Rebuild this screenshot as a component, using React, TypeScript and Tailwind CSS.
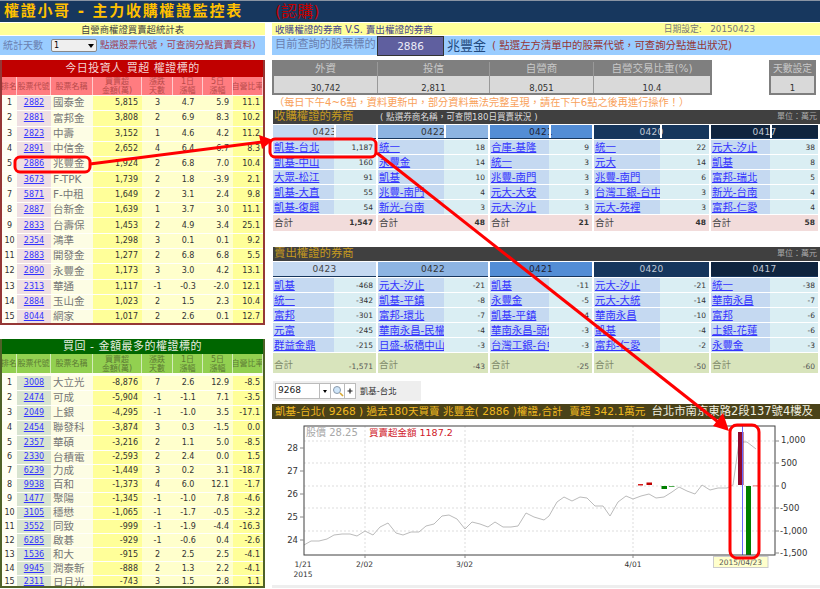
import React from "react";

type StockRow = [string, string, string, string, string, string, string, string];

const BUY_STOCKS: StockRow[] = [
  ["1", "2882", "國泰金", "5,815", "3", "4.7", "5.9", "11.1"],
  ["2", "2881", "富邦金", "3,808", "2", "6.9", "8.3", "10.2"],
  ["3", "2823", "中壽", "3,152", "1", "4.6", "4.2", "11.2"],
  ["4", "2891", "中信金", "2,652", "4", "6.4", "6.7", "8.3"],
  ["5", "2886", "兆豐金", "1,924", "2", "6.8", "7.0", "10.4"],
  ["6", "3673", "F-TPK", "1,739", "2", "1.8", "-3.9", "2.1"],
  ["7", "5871", "F-中租", "1,649", "2", "3.1", "2.4", "9.8"],
  ["8", "2887", "台新金", "1,639", "1", "3.7", "3.0", "11.1"],
  ["9", "2833", "台壽保", "1,453", "2", "4.9", "3.4", "25.1"],
  ["10", "2354", "鴻準", "1,298", "3", "0.1", "0.1", "9.2"],
  ["11", "2883", "開發金", "1,277", "2", "6.8", "6.8", "5.5"],
  ["12", "2890", "永豐金", "1,173", "3", "3.0", "4.2", "13.1"],
  ["13", "2313", "華通", "1,117", "-1", "-0.3", "-2.0", "12.1"],
  ["14", "2884", "玉山金", "1,023", "2", "1.5", "2.3", "10.4"],
  ["15", "8044", "網家", "1,017", "2", "2.6", "0.1", "12.7"],
];

const BACK_STOCKS: StockRow[] = [
  ["1", "3008", "大立光", "-8,876", "7", "2.6", "12.9", "-8.5"],
  ["2", "2474", "可成", "-5,904", "-1", "-1.1", "7.1", "-3.5"],
  ["3", "2049", "上銀", "-4,295", "-1", "-1.0", "3.5", "-17.1"],
  ["4", "2454", "聯發科", "-3,874", "3", "0.3", "-1.5", "0.0"],
  ["5", "2357", "華碩", "-3,216", "2", "1.1", "5.0", "-8.5"],
  ["6", "2330", "台積電", "-2,593", "2", "2.4", "0.0", "1.5"],
  ["7", "6239", "力成", "-1,449", "3", "0.2", "3.1", "-18.7"],
  ["8", "9938", "百和", "-1,373", "4", "6.0", "12.1", "-1.7"],
  ["9", "1477", "聚陽", "-1,345", "-1", "-1.0", "7.8", "-4.6"],
  ["10", "3105", "穩懋", "-1,065", "-1", "-1.7", "-0.5", "-3.2"],
  ["11", "3552", "同致", "-999", "-1", "-1.9", "-4.4", "-16.3"],
  ["12", "6285", "啟碁", "-929", "-1", "-0.6", "0.4", "-2.6"],
  ["13", "1536", "和大", "-915", "2", "2.5", "2.5", "-4.1"],
  ["14", "9945", "潤泰新", "-888", "2", "1.3", "2.2", "-4.1"],
  ["15", "2311", "日月光", "-743", "3", "1.5", "2.8", "1.1"],
];

const COLS = "grid grid-cols-[15px_34px_42px_49px_31px_30px_30px_30px]";

function StockTable(props: {
  title: string;
  rows: StockRow[];
  green?: boolean;
}) {
  const g = props.green;
  const head = g ? "bg-[#92d050] text-[#5c7a34]" : "bg-[#ff7c80] text-[#b84a4a]";
  return (
    <div className={g ? "mt-[14px] w-[265px] h-[249px] border-x-2 border-b-2 border-[#4f6228] overflow-hidden" : "mt-[5px] w-[265px] h-[265px] border-x-2 border-b-2 border-[#953735] overflow-hidden"}>
      <div className={g ? "h-[15px] bg-[#006600] text-[#e8efe0] text-[11px] leading-[15px] tracking-[0.5px] text-center" : "h-[17px] bg-[#c00000] text-[#f4d4d4] text-[11px] leading-[17px] tracking-[0.5px] text-center"}>
        {props.title}
      </div>
      <div className={`${COLS} bg-white ${g ? "h-[19px]" : "h-[18px]"} text-[8px] leading-[9px] text-center`}>
        {["排名", "股票代號", "股票名稱", "買賣超\n金額(萬)", "漲跌\n天數", "1日\n漲幅", "5日\n漲幅", "自營比率"].map((t) => (
          <div key={t} className={`${head} border-r border-white/60 flex items-center justify-center whitespace-pre overflow-hidden`}>{t}</div>
        ))}
      </div>
      <div className={g ? "pt-[3px] bg-[#fffff0]" : "pt-[1px] bg-[#fffff0]"}>
        {props.rows.map((r, i) => (
          <div key={r[0]} className={`${COLS} border-b border-white/70 ${g ? (i < 5 ? "h-[15px]" : "h-[13.9px]") : "h-[15.3px]"} text-[8px] text-[#333] items-stretch`}>
            <div className="bg-[#fffff4] flex items-center justify-center">{r[0]}</div>
            <div className={`${g ? "bg-[#d8e4d0]" : "bg-[#efdfe2]"} flex items-center justify-center`}>
              <a className="text-[#3333ff] underline">{r[1]}</a>
            </div>
            <div className="bg-[#fdfde4] flex items-center pl-[2px] text-[10.5px] text-[#777] whitespace-nowrap overflow-hidden">
              {r[2]}
            </div>
            <div className="bg-[#ffff99] flex items-center justify-end pr-[4px]">{r[3]}</div>
            <div className="bg-[#ffffcc] flex items-center justify-center">{r[4]}</div>
            <div className="bg-[#ffffcc] flex items-center justify-center">{r[5]}</div>
            <div className="bg-[#ffffcc] flex items-center justify-end pr-[4px]">{r[6]}</div>
            <div className="bg-[#ffff99] flex items-center justify-end pr-[3px]">{r[7]}</div>
          </div>
        ))}
      </div>
    </div>
  );
}

const STYLE = [
  { date: "0423", col: "w-[103px]", broker: "w-[61px]", head: "bg-[#c5d9f1] text-[#444]", divider: "left-[61px]" },
  { date: "0422", col: "w-[110px]", broker: "w-[66px]", head: "bg-[#8db4e2] text-[#333]", divider: "left-[66px]" },
  { date: "0421", col: "w-[102px]", broker: "w-[59px]", head: "bg-[#538dd5] text-[#223]", divider: "left-[59px]" },
  { date: "0420", col: "w-[115px]", broker: "w-[66px]", head: "bg-[#16365c] text-[#c0c8d4]", divider: "left-[66px]" },
  { date: "0417", col: "w-[107px]", broker: "w-[59px]", head: "bg-[#0f243e] text-[#c0c8d4]", divider: "left-[59px]" },
];

const BUY_DAYS: { rows: [string, string][]; total: string }[] = [
  { rows: [["凱基-台北", "1,187"], ["凱基-中山", "160"], ["大眾-松江", "91"], ["凱基-大直", "55"], ["凱基-復興", "54"]], total: "1,547" },
  { rows: [["統一", "18"], ["永豐金", "14"], ["凱基", "10"], ["兆豐-南門", "4"], ["新光-台南", "3"]], total: "48" },
  { rows: [["合庫-基隆", "9"], ["統一", "3"], ["兆豐-南門", "3"], ["元大-大安", "3"], ["元大-汐止", "3"]], total: "21" },
  { rows: [["統一", "22"], ["元大", "14"], ["兆豐-南門", "6"], ["台灣工銀-台中", "3"], ["元大-苑裡", "3"]], total: "48" },
  { rows: [["元大-汐止", "38"], ["凱基", "8"], ["富邦-瑞北", "5"], ["新光-台南", "4"], ["富邦-仁愛", "4"]], total: "58" },
];

const SELL_DAYS: { rows: [string, string][]; total: string }[] = [
  { rows: [["凱基", "-468"], ["統一", "-342"], ["富邦", "-301"], ["元富", "-245"], ["群益金鼎", "-215"]], total: "-1,571" },
  { rows: [["元大-汐止", "-21"], ["凱基-平鎮", "-8"], ["富邦-環北", "-7"], ["華南永昌-民權", "-4"], ["日盛-板橋中山", "-3"]], total: "-43" },
  { rows: [["凱基", "-11"], ["永豐金", "-5"], ["凱基-平鎮", "-4"], ["華南永昌-頭份", "-3"], ["台灣工銀-台中", "-3"]], total: "-25" },
  { rows: [["元大-汐止", "-21"], ["元大-大統", "-14"], ["華南永昌", "-10"], ["凱基", "-4"], ["富邦-仁愛", "-2"]], total: "-50" },
  { rows: [["統一", "-38"], ["華南永昌", "-7"], ["富邦", "-6"], ["土銀-花蓮", "-6"], ["永豐金", "-3"]], total: "-60" },
];

function BrokerTable(props: { days: { rows: [string, string][]; total: string }[]; sell?: boolean }) {
  const s = props.sell;
  return (
    <div className="flex gap-[2px] ml-px">
      {props.days.map((d, idx) => {
        const st = STYLE[idx];
        return (
          <div key={st.date} className={st.col}>
            <div className={`relative ${st.head} ${s ? "h-[15px]" : "h-[14px]"} border-b border-[#17375e] text-[9px] leading-[14px] text-center tracking-[0.3px]`}>
              {st.date}
              {!s && <span className={`absolute top-0 bottom-0 w-[2px] bg-white ${st.divider}`} />}
            </div>
            <div className="h-px" />
            {d.rows.map(([n, v]) => (
              <div key={n} className="flex h-[15px] border-b border-white">
                <div className={`${st.broker} bg-[#c5d9f1] pl-px text-[10.4px] leading-[14px] overflow-hidden whitespace-nowrap`}>
                  <a className="text-[#3333ff] underline">{n}</a>
                </div>
                <div className="flex-1 bg-[#daeef3] text-right pr-[3px] text-[7.5px] leading-[16px] text-[#333]">{v}</div>
              </div>
            ))}
            <div className={s ? "flex justify-between items-end h-[20px] bg-[#d8e4bc] pl-px pr-[3px] pb-[1px] text-[#7f8a6a]" : "flex justify-between items-center h-[16px] bg-[#f2dcdb] pl-px pr-[3px] text-[#444]"}>
              <span className="text-[9.5px]">合計</span>
              <span className={s ? "text-[7.5px] text-[#555]" : "text-[7.5px] font-bold text-[#333]"}>{d.total}</span>
            </div>
          </div>
        );
      })}
    </div>
  );
}

const LINE =
  "304,546 311,542 319,542 327,540 334,536 342,535 350,535 357,537 365,532 373,536 380,528 388,524 396,534 403,536 411,533 419,533 426,527 434,525 442,517 449,516 457,520 465,530 472,523 480,525 488,528 495,523 503,528 511,528 518,527 526,514 534,518 544,521 549,517 557,503 564,498 572,502 580,498 587,499 595,507 603,507 610,517 618,503 626,497 633,500 641,497 649,495 656,499 664,498 672,493 679,488 687,492 695,495 702,486 710,491 718,489 727,489 733,486 739,443 747,443 756,450";

function Chart() {
  const hGrid = [442, 464, 487, 509, 532];
  const vGrid = [365, 465, 633];
  return (
    <svg viewBox="272 420 548 166" className="block w-[548px] h-[166px]">
      <rect x="304" y="427" width="471" height="129" fill="#fff" />
      {hGrid.map((y) => (
        <line key={y} x1="304" x2="775" y1={y} y2={y} stroke="#ddd" strokeDasharray="2 2" />
      ))}
      {vGrid.map((x) => (
        <line key={x} x1={x} x2={x} y1="427" y2="556" stroke="#ddd" strokeDasharray="2 2" />
      ))}
      <polyline points={LINE} fill="none" stroke="#bbbbbb" strokeWidth="1" />
      <rect x="738" y="433" width="5.5" height="53" fill="#8c0a2e" />
      <rect x="746" y="487" width="5" height="69" fill="#007f00" />
      <line x1="742.5" x2="742.5" y1="427" y2="556" stroke="#6666ff" />
      <rect x="638" y="485" width="5" height="1.5" fill="#d62020" />
      <rect x="646.5" y="483.5" width="5.5" height="2.5" fill="#c00000" />
      <rect x="661.5" y="487" width="5.5" height="3" fill="#007f00" />
      <rect x="669" y="487" width="5.5" height="0.8" fill="#2a9a2a" />
      <rect x="753" y="486.5" width="6" height="0.8" fill="#e05050" />
      <rect x="304" y="427" width="471" height="129" fill="none" stroke="#404040" strokeWidth="1" />
      {[449, 472, 495, 518, 541].map((y) => (
        <line key={y} x1="300" x2="304" y1={y} y2={y} stroke="#888" />
      ))}
      {[442, 464, 487, 509, 532, 554].map((y) => (
        <line key={y} x1="775" x2="779" y1={y} y2={y} stroke="#888" />
      ))}
      {[365, 465, 633].map((x) => (
        <line key={x} x1={x} x2={x} y1="556" y2="559" stroke="#888" />
      ))}
      <g fontSize="8.5" fill="#333" textAnchor="end">
        {[["28", 452], ["27", 475], ["26", 498], ["25", 521], ["24", 544]].map(([t, y]) => (
          <text key={t} x="298" y={y}>{t}</text>
        ))}
      </g>
      <g fontSize="8.5" fill="#333">
        {[["1,000", 444], ["500", 467], ["0", 490], ["-500", 512], ["-1,000", 535], ["-1,500", 557]].map(([t, y]) => (
          <text key={t} x={String(t).startsWith("-") ? 780 : 781} y={y}>{t}</text>
        ))}
      </g>
      <g fontSize="7.5" fill="#333" textAnchor="middle">
        <text x="303" y="568">1/21</text>
        <text x="303" y="578">2015</text>
        <text x="364.5" y="568">2/02</text>
        <text x="464.5" y="568">3/02</text>
        <text x="633" y="568">4/01</text>
      </g>
      <text x="306" y="437" fontSize="10" fill="#a8a8a8">股價 28.25</text>
      <text x="369" y="437" fontSize="9.5" fill="#d0202a">買賣超金額 1187.2</text>
      <rect x="713.5" y="557.5" width="54.5" height="11" fill="#ffffcc" stroke="#cccccc" />
      <text x="740.5" y="566" fontSize="7.5" fill="#555" textAnchor="middle">2015/04/23</text>
    </svg>
  );
}

function Overlay() {
  return (
    <svg className="absolute inset-0 pointer-events-none" width="820" height="589" viewBox="0 0 820 589">
      <rect x="15" y="157" width="75" height="15" rx="5" fill="none" stroke="#ff0000" strokeWidth="3" />
      <rect x="270" y="139" width="106" height="18" rx="5" fill="none" stroke="#ff0000" strokeWidth="3" />
      <rect x="730" y="425" width="29" height="133" rx="7" fill="none" stroke="#ff0000" strokeWidth="3" />
      <line x1="90" y1="164" x2="262" y2="142" stroke="#ff0000" strokeWidth="3" />
      <polygon points="273,140 259,135 262,149" fill="#ff0000" />
      <line x1="377" y1="153" x2="722" y2="425" stroke="#ff0000" strokeWidth="3" />
      <polygon points="729,431 713,426 723,413" fill="#ff0000" />
    </svg>
  );
}

export default function App() {
  return (
    <div className="relative w-[820px] h-[589px] overflow-hidden bg-white font-['DejaVu_Sans','Noto_Sans_CJK_TC',sans-serif]">
      <div className="flex items-center h-[22px] border-t border-[#8a94a3] bg-[#17375e] pl-[4px]">
        <span className="w-[271px] text-[15px] font-bold tracking-[1.7px] text-[#ffc000] whitespace-nowrap">權證小哥 - 主力收購權證監控表</span>
        <span className="text-[16px] text-[#c00000] whitespace-nowrap">(認購)</span>
      </div>
      <div className="flex mt-px">
        <div className="w-[266px] shrink-0">
          <div className="w-[265px] h-[12px] bg-[#ffff99] text-center text-[9.4px] leading-[13px] text-[#444]">自營商權證買賣超統計表</div>
          <div className="flex items-center w-[265px] h-[19px] mt-px bg-[#99ccff] pl-[3px]">
            <span className="text-[10px] text-[#6a80b0] w-[48px]">統計天數</span>
            <div className="flex items-center justify-between w-[46px] h-[13px] border border-[#888] rounded-[2px] bg-[#efefef] px-[2px] text-[8px]">
              1
              <span className="w-0 h-0 border-x-[3px] border-t-[4px] border-x-transparent border-t-black" />
            </div>
            <span className="ml-[3px] text-[9.5px] text-[#a04458] whitespace-nowrap">點選股票代號，可查詢分點買賣資料)</span>
          </div>
          <StockTable title="今日投資人 買超 權證標的" rows={BUY_STOCKS} />
          <StockTable title="買回 - 金額最多的權證標的" rows={BACK_STOCKS} green />
        </div>

        <div className="flex-1 min-w-0 pl-[6px]">
          <div className="flex justify-between h-[12px] bg-[#ffff99] pl-[3px] pr-[65px] text-[9.6px] leading-[13px] whitespace-nowrap">
            <span className="text-[#44448a]">收購權證的券商 V.S. 賣出權證的券商</span>
            <span className="text-[#777] text-[8.8px]">日期設定:&nbsp;&nbsp; 20150423</span>
          </div>
          <div className="flex items-center h-[19px] mt-px bg-[#99ccff] pl-[3px]">
            <span className="w-[102px] text-[11.2px] text-[#6a80b0] whitespace-nowrap">目前查詢的股票標的</span>
            <span className="w-[67px] h-[20px] border border-[#333] bg-[#5f5f9f] text-center text-[10.5px] leading-[19px] text-[#ececf8]">2886</span>
            <span className="ml-[3px] text-[13px] text-[#1f497d] whitespace-nowrap">兆豐金</span>
            <span className="ml-[6px] text-[10.4px] text-[#953735] whitespace-nowrap">( 點選左方清單中的股票代號，可查詢分點進出狀況)</span>
          </div>

          <div className="flex justify-between mt-[5px] pr-[4px]">
            <div className="w-[440px] h-[35px] border-2 border-[#7f7f7f]">
              <div className="grid grid-cols-[104px_112px_104px_116px] h-[14px] bg-[#7f7f7f] text-[10.5px] leading-[13px] text-[#c8c8c8] text-center">
                <div className="border-r border-[#999]">外資</div>
                <div className="border-r border-[#999]">投信</div>
                <div className="border-r border-[#999]">自營商</div>
                <div>自營交易比重(%)</div>
              </div>
              <div className="grid grid-cols-[104px_112px_104px_116px] h-[17px] bg-[#d9d9d9] text-[8.5px] leading-[24px] text-[#333] text-center overflow-hidden">
                <div className="border-r border-[#999]">30,742</div>
                <div className="border-r border-[#999]">2,811</div>
                <div className="border-r border-[#999]">8,051</div>
                <div>10.4</div>
              </div>
            </div>
            <div className="w-[47px] h-[35px] border-2 border-[#7f7f7f]">
              <div className="h-[14px] bg-[#7f7f7f] text-[9.8px] leading-[13px] text-[#c8c8c8] text-center whitespace-nowrap">天數設定</div>
              <div className="h-[17px] bg-[#d9d9d9] text-[8.5px] leading-[24px] text-[#333] text-center overflow-hidden">1</div>
            </div>
          </div>

          <div className="h-[15px] pl-[2px] text-[10.2px] leading-[16px] text-[#f9a15a] whitespace-nowrap">（每日下午4~6點，資料更新中，部分資料無法完整呈現，請在下午6點之後再進行操作！）</div>

          <div className="flex items-center justify-between h-[14px] ml-px bg-[#404040] pl-[1px] pr-[3px]">
            <span className="flex items-center whitespace-nowrap">
              <span className="w-[106px] text-[11.4px] text-[#c59a1e]">收購權證的券商</span>
              <span className="text-[8.6px] text-[#dcdcdc]">( 點選券商名稱，可查閱180日買賣狀況 )</span>
            </span>
            <span className="text-[8px] text-[#aaa]">單位：萬元</span>
          </div>
          <div className="h-px" />
          <BrokerTable days={BUY_DAYS} />

          <div className="flex items-center justify-between h-[14px] mt-[16px] ml-px bg-[#404040] pl-[1px] pr-[3px]">
            <span className="text-[11.4px] text-[#c59a1e]">賣出權證的券商</span>
            <span className="text-[8px] text-[#aaa]">單位：萬元</span>
          </div>
          <div className="h-px" />
          <BrokerTable days={SELL_DAYS} sell />

          <div className="flex items-center w-[148px] h-[20px] mt-[8px] ml-px bg-[#eeeeee] pl-[2px] gap-[4px]">
            <div className="flex items-center h-[16px] bg-white border border-[#bbb]">
              <span className="w-[43px] pl-[2px] text-[9px] text-[#222]">9268</span>
              <span className="flex items-center justify-center w-[11px] h-full border-l border-[#bbb]">
                <span className="w-0 h-0 border-x-[2.5px] border-t-[3px] border-x-transparent border-t-black" />
              </span>
              <span className="flex items-center justify-center w-[14px] h-full border-l border-[#bbb]">
                <svg width="12" height="12" viewBox="0 0 12 12">
                  <circle cx="5" cy="5" r="3.5" fill="#cfe6fa" stroke="#8a99aa" />
                  <line x1="8" y1="8" x2="11" y2="11" stroke="#d8a830" strokeWidth="1.6" />
                </svg>
              </span>
              <span className="flex items-center justify-center w-[11px] h-full border-l border-[#bbb]">
                <svg width="6" height="6" viewBox="0 0 6 6">
                  <path d="M3 0.5v5M0.5 3h5" stroke="#222" strokeWidth="1.2" />
                </svg>
              </span>
            </div>
            <span className="text-[8.4px] text-[#333] whitespace-nowrap">凱基-台北</span>
          </div>

          <div className="flex items-center h-[15px] mt-[3px] bg-[#4a4219] pl-[3px] overflow-hidden whitespace-nowrap text-[10.6px]">
            <span className="text-[#f0b820]">凱基-台北( 9268 ) 過去180天買賣 兆豐金( 2886 )權證,合計&nbsp; 賣超 342.1萬元</span>
            <span className="ml-[6px] text-[11.4px] text-[#f0f0e0]">台北市南京東路2段137號4樓及</span>
          </div>
          <Chart />
          <div className="h-[3px] bg-[#eeeeee]" />
        </div>
      </div>
      <Overlay />
    </div>
  );
}
